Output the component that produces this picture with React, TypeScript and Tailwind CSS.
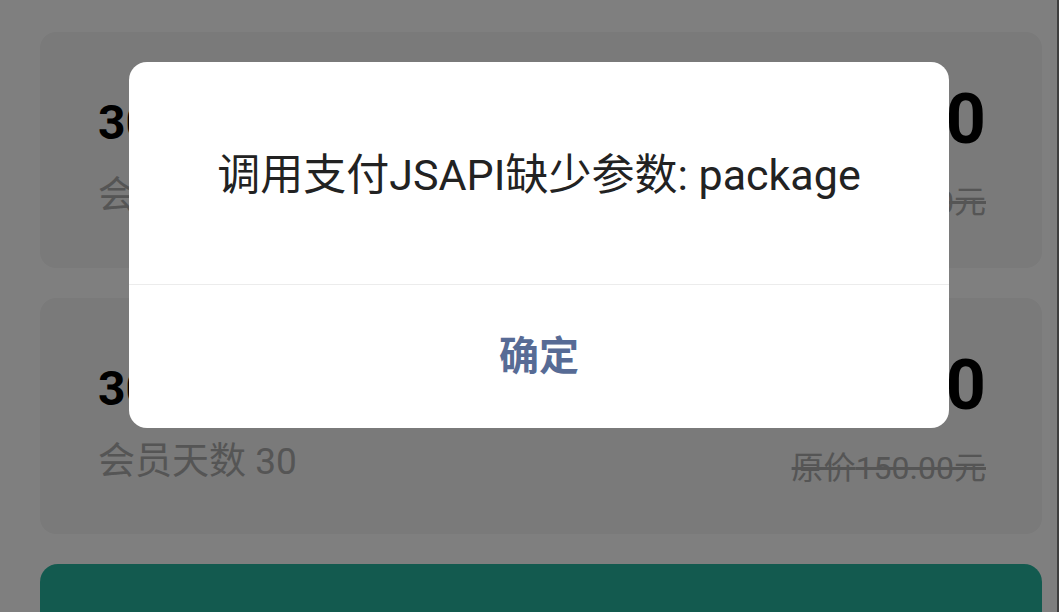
import React from "react";

const font = { fontFamily: "Roboto, 'Noto Sans CJK SC', sans-serif" };

const plans = [
  { title: "30天会员", days: 30, price: "19.90", origin: "150.00" },
  { title: "30天会员", days: 30, price: "29.90", origin: "150.00" },
];

function PlanCard({ title, days, price, origin }: (typeof plans)[number]) {
  return (
    <div className="h-[236px] shrink-0 rounded-[16px] bg-[#f4f4f4] pl-[58px] pr-[56px] flex justify-between items-start">
      <div className="pt-[67px] flex flex-col gap-[30px]">
        <div className="text-[48px] leading-[48px] font-bold text-black">{title}</div>
        <div className="text-[37px] leading-[37px] text-[#aaaaaa]">会员天数 {days}</div>
      </div>
      <div className="pt-[52px] flex flex-col items-end gap-[32px]">
        <div className="text-[70px] leading-[70px] font-bold text-black">¥{price}</div>
        <div className="text-[32px] leading-[32px] text-[#aaaaaa] line-through">原价{origin}元</div>
      </div>
    </div>
  );
}

export default function App() {
  return (
    <div className="relative w-[1059px] h-[612px] overflow-hidden bg-white flex" style={font}>
      <div className="flex-1 pt-[32px] pl-[40px] pr-[15px] flex flex-col gap-[30px]">
        {plans.map((p, i) => (
          <PlanCard key={i} {...p} />
        ))}
        <div className="h-[80px] shrink-0 rounded-[18px] bg-[#26b49e]" />
      </div>
      <div className="w-[2px] bg-[#7f7f7f]" />

      {/* mask */}
      <div className="absolute inset-0 bg-black/50" />

      {/* alert dialog */}
      <div className="absolute left-[129px] top-[62px] w-[820px] h-[366px] rounded-[18px] bg-white flex flex-col overflow-hidden">
        <div className="h-[223px] pt-[4px] flex items-center justify-center border-b border-[#ececec]">
          <p className="text-[43px] leading-[52px] text-[#222222]">调用支付JSAPI缺少参数: package</p>
        </div>
        <button className="flex-1 flex items-center justify-center text-[40px] font-bold text-[#576b95]">
          确定
        </button>
      </div>
    </div>
  );
}
